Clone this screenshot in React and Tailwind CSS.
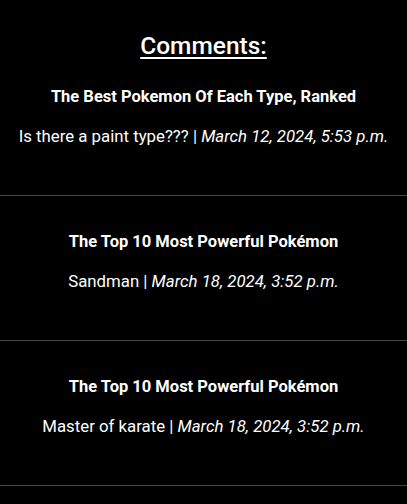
const comments = [
  {
    post: "The Best Pokemon Of Each Type, Ranked",
    body: "Is there a paint type???",
    date: "March 12, 2024, 5:53 p.m.",
  },
  {
    post: "The Top 10 Most Powerful Pokémon",
    body: "Sandman",
    date: "March 18, 2024, 3:52 p.m.",
  },
  {
    post: "The Top 10 Most Powerful Pokémon",
    body: "Master of karate",
    date: "March 18, 2024, 3:52 p.m.",
  },
]

const App = () => {
  return (
    <div className="min-h-screen bg-black text-white font-['Roboto',sans-serif] text-center pt-[30px]">
      <h2 className="text-[24.5px] leading-[32px] font-medium underline underline-offset-[3px] decoration-2">Comments:</h2>

      {comments.map((comment, i) => (
        <div key={i} className={`border-b border-[#444] pb-[49px] ${i === 0 ? "pt-[25px]" : "pt-[36px]"}`}>
          <h3 className="text-[16.5px] leading-[20px] font-bold">{comment.post}</h3>
          <p className="mt-[19px] text-[16.8px] leading-[20px]">
            {comment.body} | <em>{comment.date}</em>
          </p>
        </div>
      ))}
    </div>
  )
}

export default App
